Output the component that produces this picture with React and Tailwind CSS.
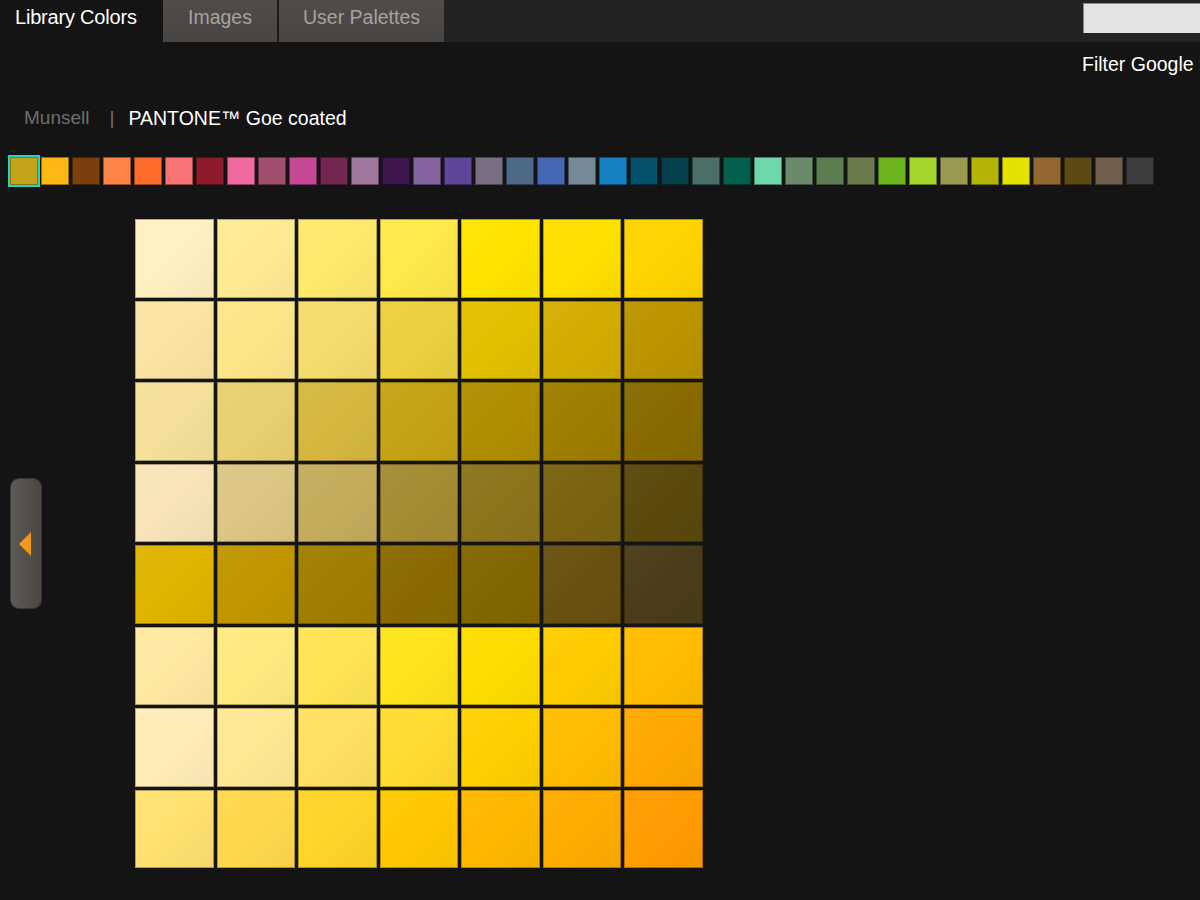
import React from "react";

const strip = [
  "#c4a51a", "#fdb813", "#7a3f0c", "#fd8545", "#fd6b2a", "#f87474", "#8f1a2b",
  "#f06aa0", "#a0506e", "#c64896", "#722650", "#a0779c", "#3f1650", "#8463a0",
  "#60469a", "#7a6f82", "#4e6a88", "#4568b5", "#778896", "#1682c4", "#045068",
  "#06404c", "#4b7068", "#03604c", "#6ed8a8", "#6a8a6c", "#5c7d50", "#6c7b4c",
  "#6cb41c", "#a4d62c", "#9a9a50", "#b4b404", "#e4e000", "#946630", "#5c4a14",
  "#725e4c", "#3c3c3c",
];

const grid = [
  ["#fff0c2", "#ffea94", "#ffe86c", "#ffe84a", "#ffe400", "#ffe000", "#ffd400"],
  ["#fbe4a2", "#fde688", "#f6dc6c", "#ecd03e", "#e2c000", "#d4ac00", "#bc9400"],
  ["#f4e098", "#e8d070", "#d6b840", "#c4a414", "#b08e00", "#9e7e00", "#886a00"],
  ["#f8e4b8", "#dcc684", "#c4ac5c", "#a48c34", "#8c741c", "#7a6210", "#5a480c"],
  ["#e0b400", "#c09600", "#a07e00", "#8a6a00", "#826600", "#6a5010", "#4a3c18"],
  ["#ffe8a0", "#ffea80", "#ffe454", "#ffe41c", "#ffdc00", "#ffcc00", "#ffbc00"],
  ["#ffecb8", "#ffe894", "#ffe060", "#ffdc30", "#ffd000", "#ffbc00", "#ffa800"],
  ["#ffe070", "#ffd84c", "#ffd428", "#ffc800", "#ffb800", "#ffac00", "#ff9c00"],
];

export default function App() {
  return (
    <div
      className="w-[1200px] h-[900px] overflow-hidden bg-[#141414] flex flex-col"
      style={{ fontFamily: '"Liberation Sans", Arial, sans-serif' }}
    >
      {/* Header / tabs */}
      <div className="h-[42px] flex bg-[#232323] shrink-0">
        <div className="w-[163px] h-full bg-[#141414] pl-[15px] pt-[6px] text-[20px] leading-[22px] text-white tracking-[-0.2px]">
          Library Colors
        </div>
        <div className="w-[114px] h-full bg-gradient-to-b from-[#504c49] to-[#474441] flex justify-center pt-[6px] text-[19.5px] leading-[22px] text-[#a3a3a3]">
          Images
        </div>
        <div className="w-[2px] h-full bg-[#1c1c1c]" />
        <div className="w-[165px] h-full bg-gradient-to-b from-[#504c49] to-[#474441] flex justify-center pt-[6px] text-[19.5px] leading-[22px] text-[#a3a3a3]">
          User Palettes
        </div>
        <div className="flex-1" />
        <div className="w-[117px] h-[30px] mt-[3px] bg-[#e4e4e4] border-t border-l border-[#8a8a8a]" />
      </div>

      {/* Filter row */}
      <div className="flex justify-end mt-[11px]">
        <div className="w-[118px] overflow-hidden whitespace-nowrap text-[19.5px] leading-[22px] text-white">
          Filter Google results
        </div>
      </div>

      {/* Library selector */}
      <div className="flex items-center mt-[32px] pl-[24px] text-[19px] leading-[22px]">
        <span className="text-[#6e6e6e]">Munsell</span>
        <span className="text-[#6e6e6e] ml-[20px]">|</span>
        <span className="text-white ml-[14px] text-[19.5px]">PANTONE™ Goe coated</span>
      </div>

      {/* Colour strip */}
      <div className="flex gap-[3px] mt-[28px] pl-[10px]">
        {strip.map((c, i) => (
          <div
            key={i}
            className={
              i === 0
                ? "w-[28px] h-[28px] shrink-0 border border-black/30 ring-2 ring-[#27d3c3]"
                : "w-[28px] h-[28px] shrink-0 border border-black/40"
            }
            style={{ backgroundColor: c }}
          />
        ))}
      </div>

      {/* Main area */}
      <div className="flex items-center mt-[34px]">
        <div className="ml-[10px] w-[32px] h-[131px] rounded-[9px] bg-gradient-to-r from-[#5e5a56] to-[#4a4642] border border-[#3a3734] flex items-center justify-center shrink-0">
          <svg width="14" height="26" viewBox="0 0 14 26" className="-ml-[3px]">
            <polygon points="1,13 13,1 13,25" fill="#f5961e" />
          </svg>
        </div>
        <div className="ml-[93px] grid grid-cols-[repeat(7,78.5px)] auto-rows-[78.5px] gap-[3px]">
          {grid.flat().map((c, i) => (
            <div
              key={i}
              className="shadow-[inset_0_0_0_1px_rgba(0,0,0,0.3)] bg-gradient-to-br from-white/[0.04] via-transparent to-black/[0.04]"
              style={{ backgroundColor: c }}
            />
          ))}
        </div>
      </div>
    </div>
  );
}
